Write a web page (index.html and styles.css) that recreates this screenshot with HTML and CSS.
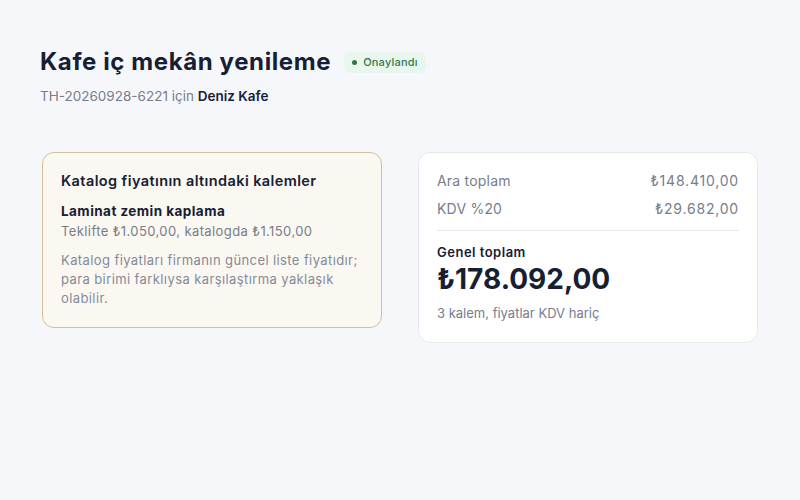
FILE: index.html
```html
<!DOCTYPE html>
<html lang="tr">
<head>
<meta charset="utf-8">
<link rel="stylesheet" href="styles.css">
</head>
<body>
<main class="page">
  <header class="head">
    <div class="title-row">
      <h1 class="title">Kafe iç mekân yenileme</h1>
      <span class="badge"><span class="dot"></span>Onaylandı</span>
    </div>
    <p class="sub">TH-20260928-6221 için <strong>Deniz Kafe</strong></p>
  </header>
  <section class="cards">
    <div class="card warn">
      <h2 class="card-title">Katalog fiyatının altındaki kalemler</h2>
      <div class="item">
        <div class="item-name">Laminat zemin kaplama</div>
        <div class="item-desc">Teklifte ₺1.050,00, katalogda ₺1.150,00</div>
      </div>
      <p class="note">Katalog fiyatları firmanın güncel liste fiyatıdır; para birimi farklıysa karşılaştırma yaklaşık olabilir.</p>
    </div>
    <div class="card totals">
      <div class="row"><span>Ara toplam</span><span class="val">₺148.410,00</span></div>
      <div class="row"><span>KDV %20</span><span class="val">₺29.682,00</span></div>
      <div class="divider"></div>
      <div class="grand-label">Genel toplam</div>
      <div class="grand">₺178.092,00</div>
      <div class="meta">3 kalem, fiyatlar KDV hariç</div>
    </div>
  </section>
</main>
</body>
</html>
```
FILE: styles.css
```css
* { box-sizing: border-box; }
html, body { margin: 0; padding: 0; }
body {
  background: #f6f7fb;
  font-family: Inter, "Noto Sans", sans-serif;
  color: #172033;
  width: 800px;
  height: 500px;
}
.page { padding: 45px 40px 0 40px; }
.title-row { display: flex; align-items: center; gap: 13px; }
.title { margin: 0; font-size: 24px; letter-spacing: 0.6px; font-weight: 700; line-height: 34px; color: #172033; }
.badge {
  display: inline-flex; align-items: center; gap: 6px;
  background: #e9f6ee; color: #2c7a4b;
  font-size: 11px; font-weight: 500; letter-spacing: 0.2px;
  height: 21px; padding: 0 8px; border-radius: 6px;
}
.dot { width: 5px; height: 5px; border-radius: 50%; background: #2c7a4b; }
.sub { margin: 7px 0 0; font-size: 13.5px; color: #767d8c; line-height: 20px; }
.sub strong { color: #172033; font-weight: 600; }
.cards {
  display: grid; grid-template-columns: 340px 340px; gap: 36px;
  margin-top: 46px; margin-left: 2px; align-items: start;
}
.card { border-radius: 12px; padding: 18px 18px; }
.warn { background: #fbf8f1; border: 1px solid #d6c09b; padding-bottom: 19px; }
.totals { background: #fff; border: 1px solid #e5e8ee; padding-bottom: 19px; }
.card-title { margin: 0; font-size: 14.5px; letter-spacing: 0.4px; font-weight: 600; line-height: 20px; color: #172033; }
.item { margin-top: 10px; }
.item-name { font-size: 13.5px; letter-spacing: 0.45px; font-weight: 700; line-height: 20px; }
.item-desc { font-size: 13px; letter-spacing: 0.4px; color: #767d8c; line-height: 20px; }
.note { margin: 9.5px 0 0; font-size: 13px; letter-spacing: 0.4px; line-height: 19px; color: #838a99; }
.row { display: flex; justify-content: space-between; font-size: 14px; letter-spacing: 0.2px; line-height: 20px; color: #767d8c; margin-bottom: 8px; }
.val { letter-spacing: 0.8px; }
.divider { height: 1px; background: #e5e8ee; margin: 11px 0 11px; }
.grand-label { font-size: 13px; letter-spacing: 0.5px; font-weight: 600; line-height: 20px; }
.grand { font-size: 28px; font-weight: 700; line-height: 34px; }
.meta { margin-top: 7px; font-size: 13px; color: #767d8c; line-height: 20px; }
```
